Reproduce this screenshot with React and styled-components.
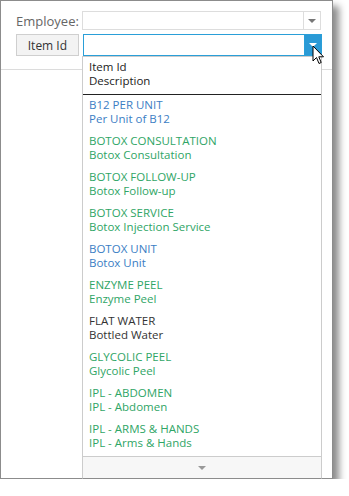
import React from 'react';
import styled, { createGlobalStyle } from 'styled-components';

const items = [
  { id: 'B12 PER UNIT', desc: 'Per Unit of B12', tone: 'blue' },
  { id: 'BOTOX CONSULTATION', desc: 'Botox Consultation', tone: 'green' },
  { id: 'BOTOX FOLLOW-UP', desc: 'Botox Follow-up', tone: 'green' },
  { id: 'BOTOX SERVICE', desc: 'Botox Injection Service', tone: 'green' },
  { id: 'BOTOX UNIT', desc: 'Botox Unit', tone: 'blue' },
  { id: 'ENZYME PEEL', desc: 'Enzyme Peel', tone: 'green' },
  { id: 'FLAT WATER', desc: 'Bottled Water', tone: 'dark' },
  { id: 'GLYCOLIC PEEL', desc: 'Glycolic Peel', tone: 'green' },
  { id: 'IPL - ABDOMEN', desc: 'IPL - Abdomen', tone: 'green' },
  { id: 'IPL - ARMS & HANDS', desc: 'IPL - Arms & Hands', tone: 'green' },
];

const tones = {
  blue: '#3b7ec4',
  green: '#2fa566',
  dark: '#333333',
};

const GlobalStyle = createGlobalStyle`
  body {
    margin: 0;
    background: #ffffff;
    font-family: "Open Sans", "Noto Sans", sans-serif;
  }
`;

const Window = styled.div`
  position: relative;
  width: 331px;
  height: 477px;
  border: 1px solid #8c8c8c;
  background: #ffffff;
  box-shadow: 6px 6px 7px rgba(0, 0, 0, 0.45);
`;

const Form = styled.div`
  display: flex;
  flex-direction: column;
  gap: 4px;
  padding: 10px 10px 0 15px;
  height: 58px;
  border-bottom: 1px solid #dcdcdc;
`;

const Row = styled.div`
  display: flex;
  align-items: center;
  gap: 4px;
`;

const Label = styled.div`
  width: 62px;
  text-align: right;
  font-size: 13px;
  color: #666666;
`;

const ModeButton = styled.div`
  width: 61px;
  height: 20px;
  border: 1px solid #cfcfcf;
  background: #f3f3f3;
  font-size: 12px;
  color: #333333;
  display: flex;
  align-items: center;
  justify-content: center;
`;

const Combo = styled.div`
  display: flex;
  width: ${(p) => (p.$active ? '240px' : '239px')};
  height: ${(p) => (p.$active ? '22px' : '19px')};
  box-sizing: border-box;
  border: 1px solid ${(p) => (p.$active ? '#2a9fd8' : '#dddddd')};
`;

const ComboField = styled.div`
  flex: 1;
`;

const ComboArrow = styled.div`
  width: 16px;
  display: flex;
  align-items: center;
  justify-content: center;
  border-left: 1px solid ${(p) => (p.$active ? '#2a9fd8' : '#dddddd')};
  background: ${(p) => (p.$active ? '#2a9ad6' : '#ffffff')};
`;

const Caret = styled.div`
  width: 0;
  height: 0;
  border-left: 4px solid transparent;
  border-right: 4px solid transparent;
  border-top: 4px solid ${(p) => p.$color};
`;

const Dropdown = styled.div`
  position: absolute;
  left: 81px;
  top: 55px;
  width: 238px;
  bottom: -1px;
  border: 1px solid #cccccc;
  border-bottom-color: #8c8c8c;
  background: #ffffff;
  display: flex;
  flex-direction: column;
  font-size: 11.5px;
  line-height: 14px;
`;

const Header = styled.div`
  padding: 3px 6px 6px;
  color: #222222;
  border-bottom: 1px solid #222222;
`;

const List = styled.div`
  flex: 1;
  overflow: hidden;
`;

const Item = styled.div`
  padding: 3px 6px 5px;
  color: ${(p) => tones[p.$tone]};
`;

const Footer = styled.div`
  height: 21px;
  border-top: 1px solid #cccccc;
  background: #f7f7f7;
  display: flex;
  align-items: center;
  justify-content: center;
`;

const Pointer = styled.svg`
  position: absolute;
  left: 311px;
  top: 44px;
`;

const App = () => (
  <>
    <GlobalStyle />
    <Window>
      <Form>
        <Row>
          <Label>Employee:</Label>
          <Combo>
            <ComboField />
            <ComboArrow>
              <Caret $color="#777777" />
            </ComboArrow>
          </Combo>
        </Row>
        <Row>
          <ModeButton>Item Id</ModeButton>
          <Combo $active>
            <ComboField />
            <ComboArrow $active>
              <Caret $color="#ffffff" />
            </ComboArrow>
          </Combo>
        </Row>
      </Form>
      <Dropdown>
        <Header>
          <div>Item Id</div>
          <div>Description</div>
        </Header>
        <List>
          {items.map((item) => (
            <Item key={item.id} $tone={item.tone}>
              <div>{item.id}</div>
              <div>{item.desc}</div>
            </Item>
          ))}
        </List>
        <Footer>
          <Caret $color="#999999" />
        </Footer>
      </Dropdown>
      <Pointer width="13" height="21" viewBox="0 0 13 21">
        <path
          d="M1 1 L1 16 L4.5 12.5 L7 18.5 L9.2 17.5 L6.8 11.8 L11.5 11.8 Z"
          fill="#ffffff"
          stroke="#000000"
          strokeWidth="1"
          strokeLinejoin="round"
        />
      </Pointer>
    </Window>
  </>
);

export default App;
